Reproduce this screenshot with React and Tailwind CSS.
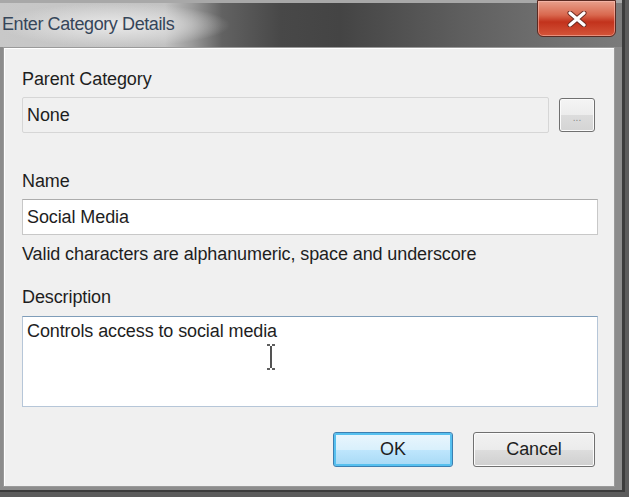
import { useState } from "react";

const font = { fontFamily: '"Liberation Sans", Arial, sans-serif' };

function Label({ children }) {
  return <div className="h-[19px] leading-[19px] text-[18px] tracking-[-0.1px] text-[#1e1e1e]">{children}</div>;
}

export default function App() {
  const [name, setName] = useState("Social Media");
  const [desc, setDesc] = useState("Controls access to social media");

  return (
    <div className="w-[629px] h-[497px] bg-[#5c5c5c] overflow-hidden" style={font}>
      <div className="w-[625px] h-[492px] flex flex-col bg-[#8c8c8c] border-r-[3px] border-b-[2px] border-[#3c3c3c]">
        {/* title bar */}
        <div className="relative h-[47px] shrink-0 border-t-[3px] border-[#a8a8a8] bg-[linear-gradient(90deg,#c8c8c8_0px,#c2c2c2_165px,#9a9a9a_192px,#626262_222px,#484848_280px,#444_340px,#5e5e5e_460px,#727272_560px,#7c7c7c_629px)]">
          <div className="absolute left-0 top-0 w-[230px] h-[44px] bg-[radial-gradient(closest-side,rgba(240,240,240,0.85)_0%,rgba(225,225,225,0.55)_60%,rgba(200,200,200,0)_100%)]" />
          <div className="relative pl-[2px] pt-[8px] text-[18px] tracking-[-0.4px] text-[#36465a]">Enter Category Details</div>
          <div className="absolute left-[537px] top-[-3px] w-[79px] h-[37px] rounded-b-[6px] border border-[#5a2a22] bg-[linear-gradient(180deg,#e8a08c_0%,#d9684e_40%,#c2321c_60%,#d4553a_100%)] flex items-center justify-center shadow-[inset_0_0_0_1px_rgba(255,200,190,0.5)]">
            <svg width="20" height="16" viewBox="0 0 20 16">
              <path d="M3 2 L17 14 M17 2 L3 14" stroke="#6a2a20" strokeWidth="5" strokeLinecap="round" />
              <path d="M3 2 L17 14 M17 2 L3 14" stroke="#ffffff" strokeWidth="3.2" strokeLinecap="round" />
            </svg>
          </div>
        </div>

        {/* client area */}
        <div className="flex-1 ml-[3px] mr-[7px] mb-[3px] bg-[#f0f0f0] border border-[#9a9a9a] shadow-[inset_1px_1px_0_#ffffff] px-[18px] pt-[22px] flex flex-col">
          <Label>Parent Category</Label>
          <div className="mt-[8px] flex items-center">
            <div className="w-[527px] h-[36px] border border-[#d6d6d6] bg-[#f0f0f0] rounded-[2px] pl-[4px] flex items-center text-[18px] tracking-[-0.1px] text-[#1e1e1e]">None</div>
            <div className="ml-[10px] w-[36px] h-[34px] rounded-[3px] border border-[#707070] bg-[linear-gradient(180deg,#f4f4f4_0%,#ececec_50%,#dcdcdc_51%,#d4d4d4_100%)] shadow-[inset_0_0_0_1px_#fbfbfb] flex items-end justify-center pb-[8px] text-[10px] leading-none text-[#8a8a8a]">...</div>
          </div>

          <div className="mt-[39px]"><Label>Name</Label></div>
          <input
            value={name}
            onChange={(e) => setName(e.target.value)}
            className="mt-[8px] w-[576px] h-[36px] border border-[#c8c8c8] border-t-[#acacac] bg-white pl-[4px] text-[18px] tracking-[-0.1px] text-[#1e1e1e] outline-none"
          />
          <div className="mt-[10px]"><Label>Valid characters are alphanumeric, space and underscore</Label></div>

          <div className="mt-[24px]"><Label>Description</Label></div>
          <div className="relative mt-[9px]">
            <textarea
              value={desc}
              onChange={(e) => setDesc(e.target.value)}
              className="block w-[576px] h-[91px] resize-none border border-[#b6c6d8] border-t-[#7f9db9] bg-white pl-[4px] pt-[3px] text-[18px] leading-[22px] tracking-[-0.1px] text-[#1e1e1e] outline-none"
            />
            {/* I-beam cursor */}
            <svg className="absolute left-[244px] top-[28px]" width="10" height="26" viewBox="0 0 10 26">
              <path d="M1 1 H4 M6 1 H9 M5 2 V24 M1 25 H4 M6 25 H9" stroke="#2a2a2a" strokeWidth="1.6" fill="none" />
            </svg>
          </div>

          <div className="mt-[25px] flex justify-end gap-[20px] pr-[1px]">
            <button className="w-[120px] h-[35px] rounded-[3px] border border-[#3c7fb1] bg-[linear-gradient(180deg,#eaf6fd_0%,#d9f0fc_50%,#bee6fd_51%,#a7d9f5_100%)] shadow-[inset_0_0_0_2px_#56c0ef] text-[18px] tracking-[-0.1px] text-[#1e1e1e]">
              OK
            </button>
            <button className="w-[122px] h-[35px] rounded-[3px] border border-[#707070] bg-[linear-gradient(180deg,#f2f2f2_0%,#ebebeb_50%,#dddddd_51%,#cfcfcf_100%)] shadow-[inset_0_0_0_1px_#fcfcfc] text-[18px] tracking-[-0.1px] text-[#1e1e1e]">
              Cancel
            </button>
          </div>
        </div>
      </div>
    </div>
  );
}
